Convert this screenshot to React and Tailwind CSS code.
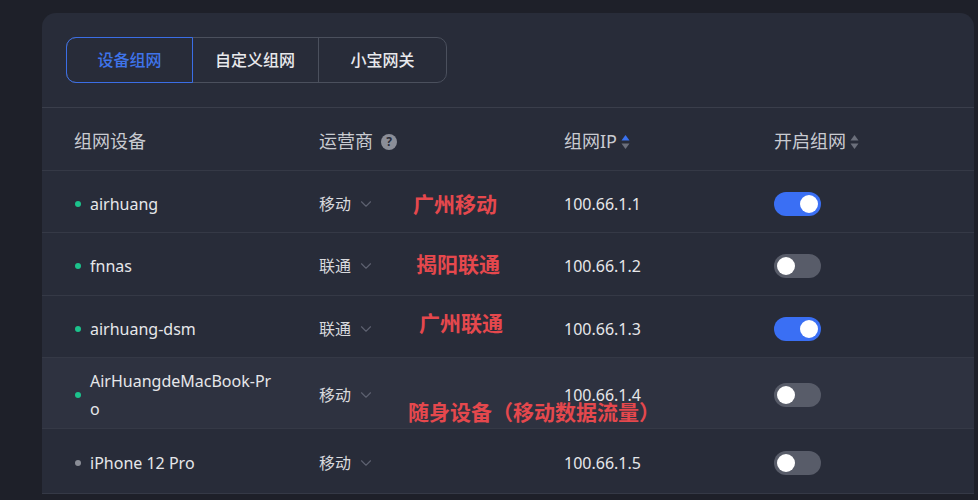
import { ChevronDown } from "lucide-react";

const rows = [
  { name: "airhuang", isp: "移动", ip: "100.66.1.1", on: true, online: true, h: "h-[62px]" },
  { name: "fnnas", isp: "联通", ip: "100.66.1.2", on: false, online: true, h: "h-[63px]" },
  { name: "airhuang-dsm", isp: "联通", ip: "100.66.1.3", on: true, online: true, h: "h-[62px]" },
  { name: "AirHuangdeMacBook-Pro", isp: "移动", ip: "100.66.1.4", on: false, online: true, h: "h-[71px]", hover: true },
  { name: "iPhone 12 Pro", isp: "移动", ip: "100.66.1.5", on: false, online: false, h: "h-[65px]" },
];

const font = { fontFamily: '"Noto Sans", "Noto Sans CJK SC", sans-serif' };

const Toggle = ({ on }) => (
  <div className={`w-[47px] h-[24px] rounded-full flex items-center px-[3px] ${on ? "bg-[#3a6ff4] justify-end" : "bg-[#585c69] justify-start"}`}>
    <div className="w-[18px] h-[18px] rounded-full bg-white" />
  </div>
);

const SortIcon = ({ active }) => (
  <svg width="9" height="16" viewBox="0 0 9 16" className="ml-1">
    <path d="M4.5 1 L8.5 6.5 L0.5 6.5 Z" fill={active ? "#3a72f0" : "#6b6f7b"} />
    <path d="M4.5 15 L8.5 9.5 L0.5 9.5 Z" fill="#6b6f7b" />
  </svg>
);

const Note = ({ className, children }) => (
  <div className={`absolute text-[21px] font-semibold text-[#e5484d] leading-none whitespace-nowrap ${className}`}>{children}</div>
);

export default function App() {
  return (
    <div className="w-[978px] h-[500px] bg-[#1e2029] pl-[42px] pt-[13px] pr-[4px] overflow-hidden" style={font}>
      <div className="relative h-[481px] bg-[#282c39] rounded-t-[14px] overflow-hidden">
        {/* tabs */}
        <div className="px-6 pt-6 pb-6">
          <div className="flex w-[381px] h-[46px] rounded-[10px] border border-[#4b505d] text-[16px] font-medium">
            <div className="w-[127px] -m-px flex items-center justify-center rounded-l-[10px] border border-[#3b6ee6] text-[#3f74ea]">设备组网</div>
            <div className="w-[127px] flex items-center justify-center text-[#e8e9ec] border-r border-[#4b505d]">自定义组网</div>
            <div className="w-[127px] flex items-center justify-center text-[#e8e9ec]">小宝网关</div>
          </div>
        </div>
        <div className="border-t border-[#3a3e4b]" />
        {/* header */}
        <div className="h-[63px] pt-[5px] grid grid-cols-[245px_245px_210px_1fr] items-center pl-8 text-[18px] text-[#c9cbd1] border-b border-[#353946]">
          <div>组网设备</div>
          <div className="flex items-center">
            运营商
            <span className="ml-2 w-4 h-4 rounded-full bg-[#8b8e98] text-[#282c39] text-[12px] font-bold flex items-center justify-center leading-none">?</span>
          </div>
          <div className="flex items-center">组网IP<SortIcon active /></div>
          <div className="flex items-center">开启组网<SortIcon /></div>
        </div>
        {rows.map((r) => (
          <div
            key={r.name}
            className={`${r.h} pt-1 grid grid-cols-[245px_245px_210px_1fr] items-center pl-8 text-[16px] text-[#e6e7ea] border-b border-[#353946] ${r.hover ? "bg-[#2e3240]" : ""}`}
          >
            <div className="flex items-center">
              <span className={`w-[6px] h-[6px] rounded-full ml-[1px] mr-[9px] shrink-0 ${r.online ? "bg-[#1cc28c]" : "bg-[#8a8d96]"}`} />
              <span className="w-[184px] break-all leading-[28px]">{r.name}</span>
            </div>
            <div className="flex items-center text-[16px] text-[#d8d9dd]">
              {r.isp}
              <ChevronDown className="ml-[6px] w-[18px] h-[18px] text-[#5d6170]" strokeWidth={1.5} />
            </div>
            <div className="text-[16px]">{r.ip}</div>
            <div><Toggle on={r.on} /></div>
          </div>
        ))}
        <Note className="left-[371px] top-[181px]">广州移动</Note>
        <Note className="left-[374px] top-[241px]">揭阳联通</Note>
        <Note className="left-[377px] top-[300px]">广州联通</Note>
        <Note className="left-[366px] top-[389px]">随身设备（移动数据流量）</Note>
      </div>
    </div>
  );
}
